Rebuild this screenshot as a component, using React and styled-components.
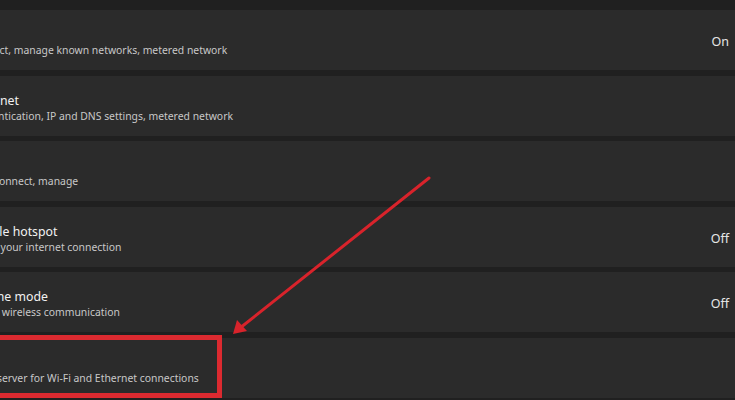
import React from "react";
import styled, { createGlobalStyle } from "styled-components";

const Global = createGlobalStyle`
    html, body {
        margin: 0;
        padding: 0;
        background: #202020;
        overflow: hidden;
    }
`;

const Page = styled.div`
    position: relative;
    width: 735px;
    height: 400px;
    overflow: hidden;
    background: #202020;
    font-family: "Noto Sans", "Open Sans", sans-serif;
`;

const List = styled.div`
    display: flex;
    flex-direction: column;
    gap: 5.5px;
    padding-top: 10px;
`;

const Row = styled.div`
    height: 60px;
    flex-shrink: 0;
    display: flex;
    align-items: center;
    justify-content: space-between;
    background: #2b2b2b;
    padding-right: 6px;
    overflow: hidden;
`;

const Text = styled.div`
    display: flex;
    flex-direction: column;
    margin-top: 4px;
    margin-left: ${ props => props.shift }px;
    white-space: nowrap;
`;

const Title = styled.div`
    color: #f2f2f2;
    font-size: 12.3px;
    line-height: 16px;
`;

const Desc = styled.div`
    color: #c8c8c8;
    font-size: 10.4px;
    line-height: 14px;
`;

const Value = styled.div`
    color: #e6e6e6;
    font-size: 12.5px;
    margin-top: 3px;
`;

const Highlight = styled.div`
    position: absolute;
    left: -10px;
    top: 335px;
    width: 232px;
    height: 63px;
    border: 5px solid #dc2a30;
    box-sizing: border-box;
`;

const Arrow = styled.svg`
    position: absolute;
    left: 0;
    top: 0;
    pointer-events: none;
`;

const rows = [
    { title: "Wi-Fi", desc: "Connect, manage known networks, metered network", value: "On", shift: -32 },
    { title: "Ethernet", desc: "Authentication, IP and DNS settings, metered network", shift: -31 },
    { title: "VPN", desc: "Add, connect, manage", shift: -31 },
    { title: "Mobile hotspot", desc: "Share your internet connection", value: "Off", shift: -30 },
    { title: "Airplane mode", desc: "Stop all wireless communication", value: "Off", shift: -37 },
    { title: "Proxy", desc: "Proxy server for Wi-Fi and Ethernet connections", shift: -33 },
];

export default function App() {
    return (
        <Page>
            <Global />

            <List>
                { rows.map(r => (
                    <Row key={ r.title }>
                        <Text shift={ r.shift }>
                            <Title>{ r.title }</Title>
                            <Desc>{ r.desc }</Desc>
                        </Text>

                        { r.value && <Value>{ r.value }</Value> }
                    </Row>
                )) }
            </List>

            <Highlight />

            <Arrow width="735" height="400" viewBox="0 0 735 400">
                <line x1="429" y1="178" x2="240" y2="328" stroke="#d8232b" strokeWidth="3" strokeLinecap="round" />
                <polygon points="233,334 237,320 247,331" fill="#d8232b" />
            </Arrow>
        </Page>
    );
}
